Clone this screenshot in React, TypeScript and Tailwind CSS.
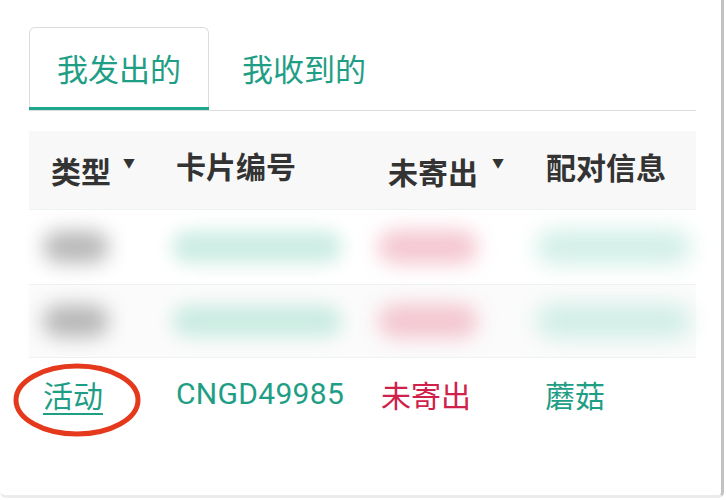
export default function App() {
  const font = { fontFamily: '"Noto Sans CJK SC", "Noto Sans", sans-serif' };
  const blurRows = [
    { bg: "bg-white", h: "h-[75px]" },
    { bg: "bg-[#fbfbfb]", h: "h-[73px]" },
  ];
  return (
    <div className="w-[726px] h-[500px] bg-white" style={font}>
      <div className="w-[724px] h-[498px] border-r-[3px] border-b-[3px] border-r-[#c2c2c2] border-b-[#ececec] rounded-br-md rounded-bl-md pt-[27px] pl-[29px] pr-[27px]">
        {/* Tabs */}
        <div className="flex border-b border-[#dcdcdc] w-[667px]">
          <div className="w-[180px] h-[83px] -mb-px border border-[#dcdcdc] border-b-0 rounded-t-md flex flex-col">
            <div className="flex-1 flex items-center justify-center text-[31px] leading-none text-[#1f9e86]">我发出的</div>
            <div className="h-[3px] bg-[#1fa88c] -mx-px"></div>
          </div>
          <div className="w-[190px] h-[83px] flex items-center justify-center text-[31px] leading-none text-[#1f9e86] pb-[3px]">我收到的</div>
        </div>

        {/* Table */}
        <div className="mt-[20px] w-[667px]">
          <div className="grid grid-cols-[131px_210px_160px_166px] h-[79px] bg-[#f8f8f8] border-b border-[#edf3f2] font-bold text-[30px] leading-none text-[#333]">
            <div className="flex items-center pl-[22px]">
              <span>类型</span>
              <span className="text-[12px] ml-[12px] mb-[14px]">▼</span>
            </div>
            <div className="flex items-center pl-[16px] mb-[10px]">卡片编号</div>
            <div className="flex items-center pl-[18px]">
              <span className="mt-[2px]">未寄出</span>
              <span className="text-[12px] ml-[14px] mb-[14px]">▼</span>
            </div>
            <div className="flex items-center pl-[16px] mb-[9px]">配对信息</div>
          </div>

          {blurRows.map((r, i) => (
            <div key={i} className={`grid grid-cols-[131px_210px_160px_166px] ${r.h} ${r.bg} border-b border-[#edf3f2] items-center`}>
              <div className="pl-[14px]">
                <div className="w-[66px] h-[32px] rounded-full bg-[#9a9a9a] blur-[10px] opacity-70"></div>
              </div>
              <div className="pl-[12px]">
                <div className="w-[170px] h-[32px] rounded-full bg-[#bfe8dc] blur-[9px] opacity-80"></div>
              </div>
              <div className="pl-[8px]">
                <div className="w-[100px] h-[34px] rounded-full bg-[#f2b9c6] blur-[10px] opacity-80"></div>
              </div>
              <div className="pl-[6px]">
                <div className="w-[155px] h-[34px] rounded-full bg-[#c6ebe1] blur-[11px] opacity-80"></div>
              </div>
            </div>
          ))}

          <div className="grid grid-cols-[131px_210px_160px_166px] h-[77px] pb-[5px] items-center text-[30px] leading-none">
            <div className="relative pl-[14px]">
              <span className="relative z-10 text-[#1f9e86] underline underline-offset-[6px] decoration-[2px]">活动</span>
              <svg className="absolute left-[-22px] top-1/2 -translate-y-1/2 mt-[6px]" width="140" height="80" viewBox="0 0 140 80">
                <ellipse cx="70" cy="40" rx="61" ry="34" fill="none" stroke="#e5391d" strokeWidth="5" />
              </svg>
            </div>
            <div className="pl-[16px] text-[#1f9e86] tracking-[0.3px]" style={{ fontFamily: 'Roboto, "Noto Sans", sans-serif' }}>CNGD49985</div>
            <div className="pl-[11px] text-[#cf2149]">未寄出</div>
            <div className="pl-[15px] text-[#1f9e86]">蘑菇</div>
          </div>
        </div>
      </div>
    </div>
  );
}
